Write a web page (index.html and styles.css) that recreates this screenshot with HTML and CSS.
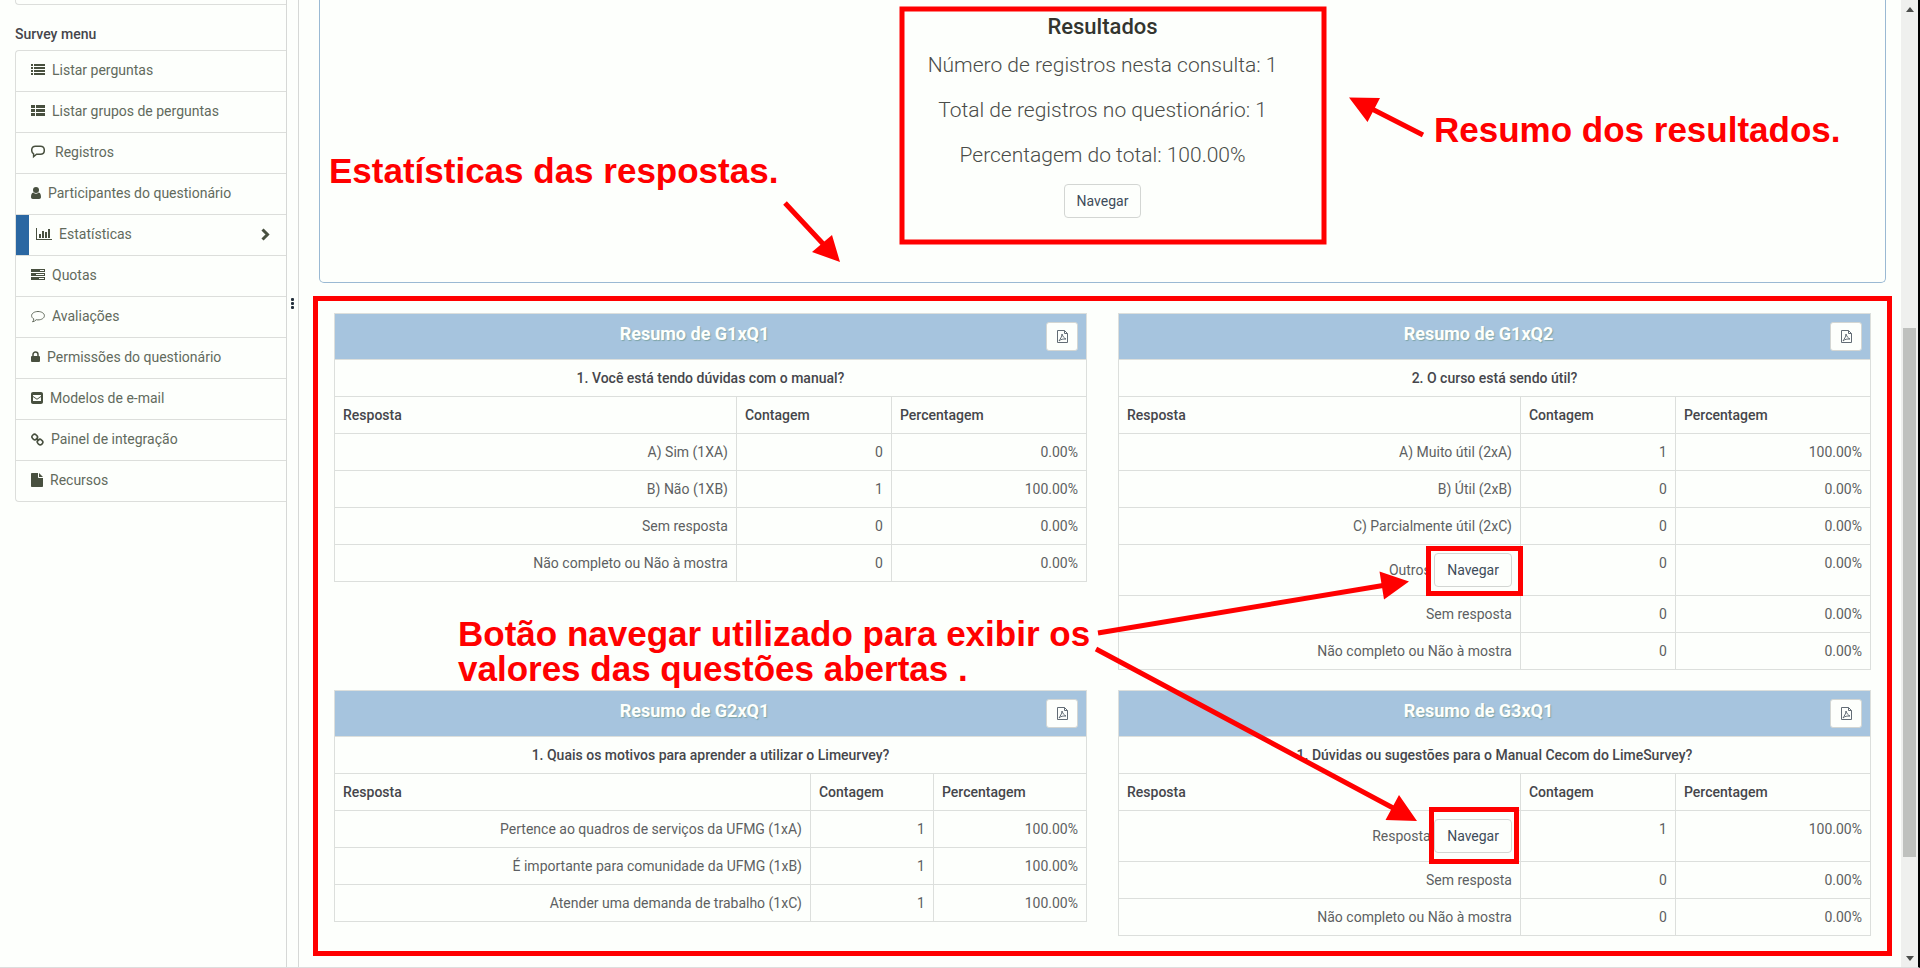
FILE: index.html
```html
<!DOCTYPE html>
<html lang="pt-BR">
<head>
<meta charset="utf-8">
<title>Estatísticas do questionário</title>
<link rel="stylesheet" href="styles.css">
</head>
<body>
<div class="app">
  <aside class="sidebar">
    <div class="menu-tail"></div>
    <h2 class="menu-title">Survey menu</h2>
    <nav class="menu">
      <a class="item" href="#"><svg width="14" height="12" viewBox="0 0 14 12"><path d="M0 0h2v2H0zM3 0h11v2H3zM0 3h2v2H0zM3 3h11v2H3zM0 6h2v2H0zM3 6h11v2H3zM0 9h2v2H0zM3 9h11v2H3z"/></svg>Listar perguntas</a>
      <a class="item" href="#"><svg width="14" height="12" viewBox="0 0 14 12"><path d="M0 0h4v3H0zM5 0h9v3H5zM0 4h4v3H0zM5 4h9v3H5zM0 8h4v3H0zM5 8h9v3H5z"/></svg>Listar grupos de perguntas</a>
      <a class="item wide" href="#"><svg width="14" height="14" viewBox="0 0 14 14"><path class="line" d="M4.500 1.200h5c2.400 0 3.800 1.600 3.800 4s-1.400 4-3.800 4H5.500L2.600 11.700V8.900C1.300 8.200.7 6.800.7 5.200c0-2.400 1.400-4 3.800-4z"/></svg>Registros</a>
      <a class="item" href="#"><svg width="10" height="12" viewBox="0 0 10 12"><circle cx="5" cy="3" r="3"/><path d="M2.400 5.500C.6 5.800 0 7.800 0 10c0 1.200.7 2 1.800 2h6.400C9.300 12 10 11.200 10 10c0-2.200-.6-4.200-2.400-4.500a3.700 3.700 0 0 1-5.200 0z"/></svg>Participantes do questionário</a>
      <a class="item active" href="#"><svg width="16" height="12" viewBox="0 0 16 12"><path d="M0 0h1v11h15v1H0zM3 6h2v4H3zM6 3h2v7H6zM9 4h2v6H9zM12 1h2v9h-2z"/></svg>Estatísticas<svg class="chevron" width="9" height="13" viewBox="0 0 9 13"><path d="M1.500 1.500l5 5-5 5"/></svg></a>
      <a class="item" href="#"><svg width="14" height="12" viewBox="0 0 14 12"><path fill-rule="evenodd" d="M0 0h14v3H0zM9 1v1h4V1zM0 4h14v3H0zM5 5v1h8V5zM0 8h14v3H0zM8 9v1h5V9z"/></svg>Quotas</a>
      <a class="item" href="#"><svg width="14" height="13" viewBox="0 0 14 13"><path class="thin" d="M7 1.500c3.500 0 6.400 1.800 6.400 4.200S10.500 9.900 7 9.900c-.6 0-1.200 0-1.700-.2C4.200 10.800 3 11.600 1.500 11.800c.7-.7 1.200-1.600 1.300-2.900C1.400 8.200.6 7 .6 5.700.6 3.300 3.500 1.500 7 1.500z"/></svg>Avaliações</a>
      <a class="item" href="#"><svg width="9" height="12" viewBox="0 0 9 12"><path class="line" d="M2 6V3.500a2.500 2.500 0 0 1 5 0V6"/><rect y="5" width="9" height="6" rx="1"/></svg>Permissões do questionário</a>
      <a class="item" href="#"><svg width="12" height="12" viewBox="0 0 12 12"><path fill-rule="evenodd" d="M2 0h8c1.200 0 2 .8 2 2v8c0 1.200-.8 2-2 2H2c-1.200 0-2-.8-2-2V2C0 .8.800 0 2 0zM2 3v1l4 2.700L10 4V3zM2 5v4h8V5L6 7.700z"/></svg>Modelos de e-mail</a>
      <a class="item" href="#"><svg width="13" height="13" viewBox="0 0 13 13"><g class="link"><rect x="1" y="1.500" width="5.500" height="5" rx="2.300" transform="rotate(45 3.700 4)"/><rect x="6.300" y="6.500" width="5.500" height="5" rx="2.300" transform="rotate(45 9 9)"/><path d="M5 5.200l3 2.800"/></g></svg>Painel de integração</a>
      <a class="item" href="#"><svg width="12" height="14" viewBox="0 0 12 14"><path d="M.8 0H7v4.200c0 .5.300.8.800.8H12v8.200c0 .5-.3.800-.8.800H.8c-.5 0-.8-.3-.8-.8V.8C0 .3.300 0 .8 0zM8 0l4 4H8z"/></svg>Recursos</a>
    </nav>
  </aside>
  <div class="handle"><span></span><span></span><span></span></div>
  <main class="main">
    <section class="panel">
      <h1>Resultados</h1>
      <p>Número de registros nesta consulta: 1</p>
      <p>Total de registros no questionário: 1</p>
      <p>Percentagem do total: 100.00%</p>
      <button class="btn" type="button">Navegar</button>
    </section>
    <section class="stats">
      <table class="table">
        <colgroup><col><col class="count"><col class="percent"></colgroup>
        <thead>
          <tr class="head"><th colspan="3"><div class="bar"><h3>Resumo de G1xQ1</h3><button class="pdf" type="button" aria-label="Exportar PDF"><svg width="11" height="13" viewBox="0 0 11 13"><path d="M.5.500H7.500l3 3v9H.5zM7.500.500v3h3M2 11c1-2 3-4 3-7 1 3 2 4 4 5-3 0-5 0-7 2z"/></svg></button></div></th></tr>
          <tr><th class="question" colspan="3">1. Você está tendo dúvidas com o manual?</th></tr>
          <tr><th>Resposta</th><th>Contagem</th><th>Percentagem</th></tr>
        </thead>
        <tbody>
          <tr><td>A) Sim (1XA)</td><td>0</td><td>0.00%</td></tr>
          <tr><td>B) Não (1XB)</td><td>1</td><td>100.00%</td></tr>
          <tr><td>Sem resposta</td><td>0</td><td>0.00%</td></tr>
          <tr><td>Não completo ou Não à mostra</td><td>0</td><td>0.00%</td></tr>
        </tbody>
      </table>
      <table class="table">
        <colgroup><col><col class="count"><col class="percent"></colgroup>
        <thead>
          <tr class="head"><th colspan="3"><div class="bar"><h3>Resumo de G1xQ2</h3><button class="pdf" type="button" aria-label="Exportar PDF"><svg width="11" height="13" viewBox="0 0 11 13"><path d="M.5.500H7.500l3 3v9H.5zM7.500.500v3h3M2 11c1-2 3-4 3-7 1 3 2 4 4 5-3 0-5 0-7 2z"/></svg></button></div></th></tr>
          <tr><th class="question" colspan="3">2. O curso está sendo útil?</th></tr>
          <tr><th>Resposta</th><th>Contagem</th><th>Percentagem</th></tr>
        </thead>
        <tbody>
          <tr><td>A) Muito útil (2xA)</td><td>1</td><td>100.00%</td></tr>
          <tr><td>B) Útil (2xB)</td><td>0</td><td>0.00%</td></tr>
          <tr><td>C) Parcialmente útil (2xC)</td><td>0</td><td>0.00%</td></tr>
          <tr><td>Outros <button class="btn" type="button">Navegar</button></td><td>0</td><td>0.00%</td></tr>
          <tr><td>Sem resposta</td><td>0</td><td>0.00%</td></tr>
          <tr><td>Não completo ou Não à mostra</td><td>0</td><td>0.00%</td></tr>
        </tbody>
      </table>
      <table class="table">
        <colgroup><col><col class="count-narrow"><col class="percent-narrow"></colgroup>
        <thead>
          <tr class="head"><th colspan="3"><div class="bar"><h3>Resumo de G2xQ1</h3><button class="pdf" type="button" aria-label="Exportar PDF"><svg width="11" height="13" viewBox="0 0 11 13"><path d="M.5.500H7.500l3 3v9H.5zM7.500.500v3h3M2 11c1-2 3-4 3-7 1 3 2 4 4 5-3 0-5 0-7 2z"/></svg></button></div></th></tr>
          <tr><th class="question" colspan="3">1. Quais os motivos para aprender a utilizar o Limeurvey?</th></tr>
          <tr><th>Resposta</th><th>Contagem</th><th>Percentagem</th></tr>
        </thead>
        <tbody>
          <tr><td>Pertence ao quadros de serviços da UFMG (1xA)</td><td>1</td><td>100.00%</td></tr>
          <tr><td>É importante para comunidade da UFMG (1xB)</td><td>1</td><td>100.00%</td></tr>
          <tr><td>Atender uma demanda de trabalho (1xC)</td><td>1</td><td>100.00%</td></tr>
        </tbody>
      </table>
      <table class="table">
        <colgroup><col><col class="count"><col class="percent"></colgroup>
        <thead>
          <tr class="head"><th colspan="3"><div class="bar"><h3>Resumo de G3xQ1</h3><button class="pdf" type="button" aria-label="Exportar PDF"><svg width="11" height="13" viewBox="0 0 11 13"><path d="M.5.500H7.500l3 3v9H.5zM7.500.500v3h3M2 11c1-2 3-4 3-7 1 3 2 4 4 5-3 0-5 0-7 2z"/></svg></button></div></th></tr>
          <tr><th class="question" colspan="3">1. Dúvidas ou sugestões para o Manual Cecom do LimeSurvey?</th></tr>
          <tr><th>Resposta</th><th>Contagem</th><th>Percentagem</th></tr>
        </thead>
        <tbody>
          <tr><td>Resposta <button class="btn" type="button">Navegar</button></td><td>1</td><td>100.00%</td></tr>
          <tr><td>Sem resposta</td><td>0</td><td>0.00%</td></tr>
          <tr><td>Não completo ou Não à mostra</td><td>0</td><td>0.00%</td></tr>
        </tbody>
      </table>
    </section>
  </main>
  <div class="scroll">
    <svg width="8" height="5" viewBox="0 0 8 5"><path d="M0 5l4-5 4 5z"/></svg>
    <div class="track"><div class="thumb"></div></div>
    <svg width="8" height="5" viewBox="0 0 8 5"><path d="M0 0l4 5 4-5z"/></svg>
  </div>
</div>
<svg class="marks" width="1918" height="960" viewBox="0 0 1918 960" aria-hidden="true">
  <g class="mark-line">
    <rect x="902" y="9" width="422" height="233"/>
    <rect x="1428.500" y="548.500" width="92" height="45"/>
    <rect x="1431.500" y="809.500" width="85" height="52"/>
    <path d="M1423 135L1372 109M785 203L826 247M1098 633L1386 585M1096 649L1395 809"/>
  </g>
  <path class="mark-head" d="M1349 97.500l31 .5-12.500 24zM840 262l-28-10 20-17zM1409 581.500l-29.500-10 4.500 28zM1417 821l-18-26-13.500 25z"/>
</svg>
<p class="note note-summary">Resumo dos resultados.</p>
<p class="note note-stats">Estatísticas das respostas.</p>
<p class="note note-browse">Botão navegar utilizado para exibir os<br>valores das questões abertas .</p>
</body>
</html>
```
FILE: styles.css
```css
* { box-sizing: border-box; }
body {
  margin: 0;
  position: relative;
  background: #fdfffc;
  color: #5d5f62;
  font: 14px/20px Roboto, sans-serif;
}
h1, h2, h3, p { margin: 0; }
.app {
  display: grid;
  grid-template-columns: 287px 12px minmax(0, 1fr) 17px;
  min-height: 100vh;
  border-right: 2px solid #000;
  border-bottom: 1px solid #ddd;
}
.sidebar { border-right: 1px solid #d6d8d6; padding-left: 15px; }
.menu-tail {
  height: 5px;
  border: solid #dcdedb;
  border-width: 0 0 1px 1px;
  border-radius: 0 0 0 4px;
}
.menu-title {
  padding: 19px 0 6px;
  font-size: 14px;
  line-height: 20px;
  font-weight: 500;
  color: #45454b;
}
.menu {
  border: 1px solid #dcdedb;
  border-right: 0;
  border-radius: 4px 0 0 4px;
}
.item {
  display: flex;
  align-items: center;
  gap: 7px;
  height: 41px;
  padding: 0 16px 2px 15px;
  border-bottom: 1px solid #dcdedb;
  color: #626a5c;
  text-decoration: none;
}
.item:last-child { height: 40px; padding-bottom: 3px; border-bottom: 0; }
.item.wide { gap: 10px; }
.item.active {
  padding-left: 20px;
  background: linear-gradient(#2a67a2, #2a67a2) left / 13px 100% no-repeat;
}
.item svg { fill: #48503f; }
.item .line { fill: none; stroke: #48503f; stroke-width: 1.5; }
.item .thin { fill: none; stroke: #626a5c; }
.item .link { fill: none; stroke: #48503f; stroke-width: 1.6; }
.item .chevron { margin-left: auto; fill: none; stroke: #48503f; stroke-width: 3; }
.handle {
  display: flex;
  flex-direction: column;
  align-items: center;
  gap: 1px;
  padding-top: 298px;
  border-right: 1px solid #d6d8d6;
}
.handle span { width: 3px; height: 3px; border-radius: 1px; background: #24303c; }
.main { padding: 0 9px 9px 14px; }
.panel {
  display: flex;
  flex-direction: column;
  align-items: center;
  height: 283px;
  margin: 0 6px;
  padding-top: 15px;
  border: 1px solid #9ab9d3;
  border-top: 0;
  border-radius: 0 0 5px 5px;
}
.panel h1 { margin-bottom: 14px; font-size: 22px; line-height: 24px; font-weight: 500; color: #33352f; }
.panel p { height: 45px; font-size: 21px; line-height: 24px; font-weight: 300; color: #4a4c48; }
.panel p + .btn { margin-top: -4px; }
.btn {
  height: 34px;
  padding: 0 12px;
  border: 1px solid #d3d6d3;
  border-radius: 4px;
  background: #fdfffc;
  color: #3e4c5a;
  font: 14px/20px Roboto, sans-serif;
}
.stats {
  display: grid;
  grid-template-columns: 1fr 1fr;
  align-items: start;
  gap: 20px 31px;
  margin-top: 13px;
  padding: 12px 16px 15px;
  border: 5px solid #f00;
}
.table {
  width: 100%;
  table-layout: fixed;
  border-collapse: collapse;
}
.count { width: 155px; }
.percent { width: 195px; }
.count-narrow { width: 123px; }
.percent-narrow { width: 153px; }
.table th, .table td { padding: 8px; border: 1px solid #dcdfdc; vertical-align: top; }
.table th { text-align: left; font-weight: 500; color: #45464b; }
.table td { text-align: right; }
.table .question { text-align: center; }
.table .head th { background: #a6c4de; }
.bar { display: flex; align-items: flex-start; }
.bar h3 {
  flex: 1;
  text-align: center;
  font-size: 18px;
  line-height: 24px;
  font-weight: 700;
  color: #fdfffc;
  text-shadow: 1px 1px 1px #7fa5a8;
}
.pdf {
  display: flex;
  align-items: center;
  justify-content: center;
  width: 32px;
  height: 29px;
  padding: 0;
  border: 1px solid #d3d6d3;
  border-radius: 3px;
  background: #fdfffc;
}
.pdf svg { fill: none; stroke: #626c75; }
.scroll {
  display: flex;
  flex-direction: column;
  align-items: center;
  gap: 6px;
  padding: 7px 2px 6px;
  background: #eff0ee;
}
.scroll svg { fill: #4b4d4b; }
.track { flex: 1; width: 100%; padding-top: 310px; }
.thumb { height: 529px; background: #bfc1be; }
.marks { position: absolute; top: 0; left: 0; pointer-events: none; }
.mark-line { fill: none; stroke: #f00; stroke-width: 5; }
.mark-head { fill: #f00; }
.note {
  position: absolute;
  color: #f00;
  font: 700 35px/35px "Liberation Sans", Arial, sans-serif;
  white-space: nowrap;
}
.note-summary { left: 1434px; top: 112px; }
.note-stats { left: 329px; top: 153px; }
.note-browse { left: 458px; top: 616px; }
```
